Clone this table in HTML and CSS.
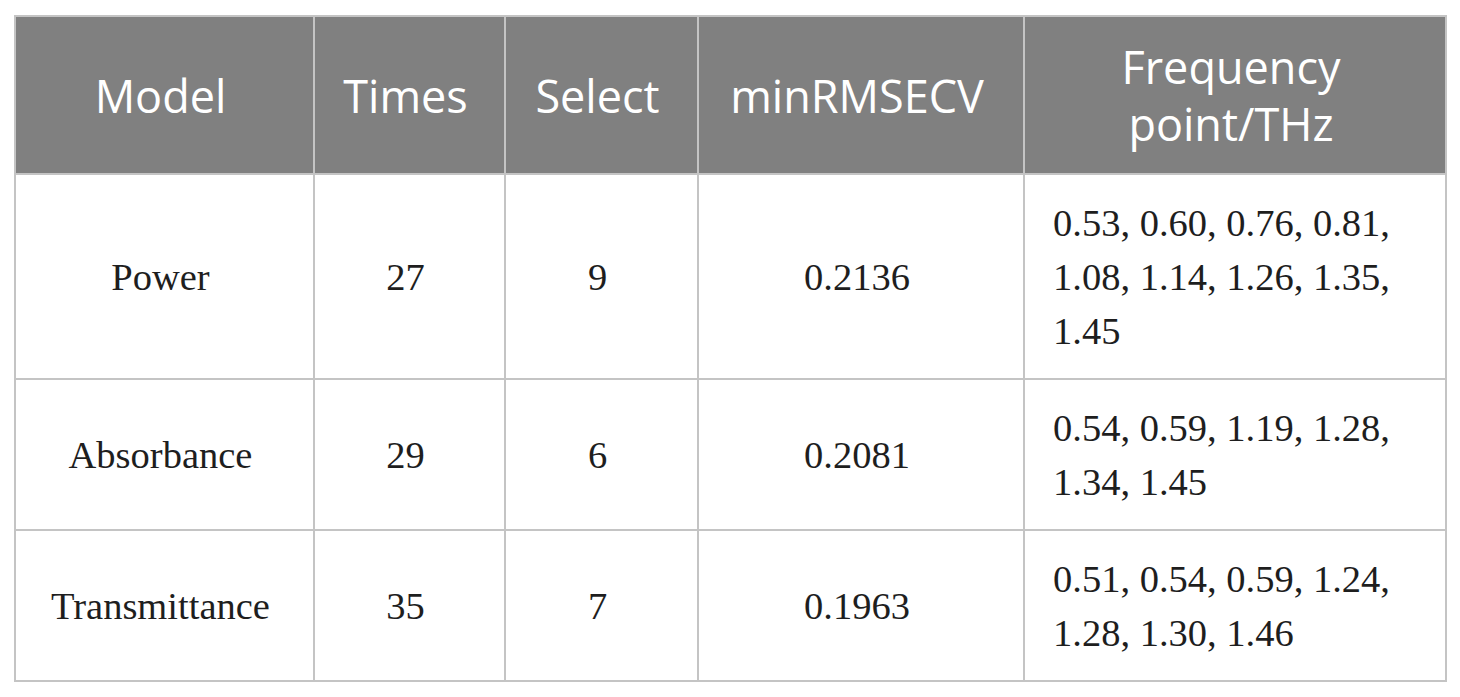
FILE: index.html
```html
<!DOCTYPE html>
<html>
<head>
<meta charset="utf-8">
<link rel="stylesheet" href="styles.css">
</head>
<body>
<table class="data">
  <colgroup>
    <col class="c1"><col class="c2"><col class="c3"><col class="c4"><col class="c5">
  </colgroup>
  <thead>
    <tr>
      <th>Model</th>
      <th>Times</th>
      <th>Select</th>
      <th>minRMSECV</th>
      <th>Frequency<br>point/THz</th>
    </tr>
  </thead>
  <tbody>
    <tr class="r1">
      <td>Power</td><td>27</td><td>9</td><td>0.2136</td>
      <td class="freq">0.53, 0.60, 0.76, 0.81, 1.08, 1.14, 1.26, 1.35, 1.45</td>
    </tr>
    <tr class="r2">
      <td>Absorbance</td><td>29</td><td>6</td><td>0.2081</td>
      <td class="freq">0.54, 0.59, 1.19, 1.28, 1.34, 1.45</td>
    </tr>
    <tr class="r3">
      <td>Transmittance</td><td>35</td><td>7</td><td>0.1963</td>
      <td class="freq">0.51, 0.54, 0.59, 1.24, 1.28, 1.30, 1.46</td>
    </tr>
  </tbody>
</table>
</body>
</html>
```
FILE: styles.css
```css
html, body {
  margin: 0;
  padding: 0;
  background: #ffffff;
}
body {
  padding: 15px 0 0 14px;
}
.data {
  border-collapse: collapse;
  table-layout: fixed;
  width: 1431px;
}
.c1 { width: 299px; }
.c2 { width: 191px; }
.c3 { width: 193px; }
.c4 { width: 326px; }
.c5 { width: 422px; }
.data th, .data td {
  border: 2px solid #c4c4c4;
  text-align: center;
  vertical-align: middle;
}
.data th {
  background: #808080;
  color: #ffffff;
  font-family: "Open Sans", "Noto Sans", sans-serif;
  font-weight: 400;
  font-size: 45px;
  line-height: 57px;
  height: 158px;
  padding: 0 28px 0 20px;
  box-sizing: border-box;
}
.data td {
  font-family: "Liberation Serif", serif;
  font-size: 38.5px;
  line-height: 54px;
  color: #1e1e1e;
  padding: 0 28px 0 20px;
  box-sizing: border-box;
}
.data td.freq {
  text-align: left;
  padding: 0 20px 0 28px;
}
.r1 td { height: 205px; }
.r2 td { height: 151px; }
.r3 td { height: 151px; }
```
